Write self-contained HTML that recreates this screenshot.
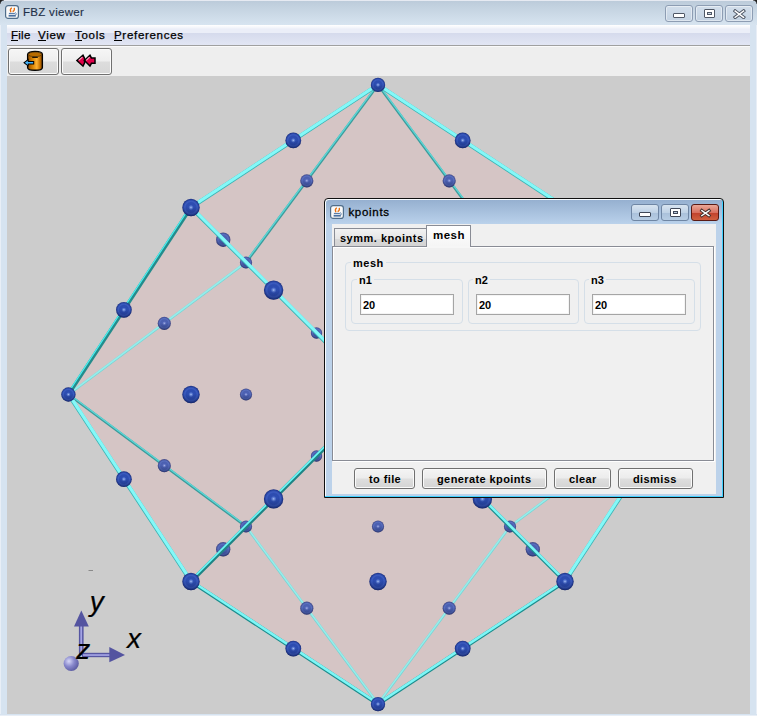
<!DOCTYPE html>
<html><head><meta charset="utf-8">
<style>
*{box-sizing:border-box}
html,body{margin:0;padding:0}
body{width:757px;height:716px;overflow:hidden;position:relative;background:#d6e3f0;font-family:"Liberation Sans",sans-serif}
.a{position:absolute}
#title{left:0;top:0;width:757px;height:25px;background:linear-gradient(#e6eaf2 0,#e6eaf2 1px,#bccbda 1px,#c2d1df 6px,#d7e4f0 25px)}
#lframe{left:0;top:25px;width:7px;height:691px;background:linear-gradient(90deg,#e8eef6 0,#e8eef6 1px,#d6e3f0 1px)}
#rframe{left:750px;top:25px;width:7px;height:691px;background:linear-gradient(90deg,#d6e3f0 0,#d6e3f0 6px,#e8eef6 6px)}
#bframe{left:0;top:714px;width:757px;height:2px;background:linear-gradient(#d6e3f0 0,#d6e3f0 1px,#e8eef6 1px)}
#menubar{left:7px;top:25px;width:743px;height:20px;background:linear-gradient(#ffffff 0,#f2f4fa 3px,#ebeef8 4px,#ebeef8 8px,#d5daec 8px,#e2e6f4 20px)}
#mline{left:7px;top:45px;width:743px;height:1px;background:#a0a0a0}
#toolbar{left:7px;top:46px;width:743px;height:30px;background:linear-gradient(#fafafa 0,#fafafa 1px,#eeeeee 1px)}
#canvas{left:7px;top:76px;width:743px;height:638px;background:#cccccc;overflow:hidden}
.menu{top:25px;height:20px;font-size:11.5px;line-height:20px;color:#000;letter-spacing:0.7px;white-space:nowrap;-webkit-text-stroke:0.25px #000}
.menu u{text-decoration:none;border-bottom:1px solid #000;display:inline-block;line-height:14px;height:15px}
.tbtn{top:48px;width:51px;height:27px;border:1px solid #707070;border-radius:3px;background:linear-gradient(#f6f6f6 0,#eeeeee 12px,#dddddd 13px,#d6d6d6 26px);box-shadow:inset 0 0 0 1px #fbfbfb}
.wbtn{top:5px;width:28px;height:17px;border:1px solid #8d9db3;border-radius:3px;background:linear-gradient(#d2deeb,#c3d2e2);box-shadow:inset 0 0 0 1px rgba(255,255,255,0.45)}
#dlg{left:324px;top:198px;width:400px;height:300px;border:1px solid #101010;border-radius:4px 4px 0 0;background:linear-gradient(#f8fcff 0,#f8fcff 1px,#96b0d0 1px,#b8d0ea 24px,#bcd2ea 25px);box-shadow:inset -1px -1px 0 #40d0ff, inset 1px 1px 0 #f8fcff}
#dcontent{left:7px;top:25px;width:384px;height:270px;background:#f0f0f0}
.dbtn{top:5px;width:28px;height:17px;border:1px solid #6f86a4;border-radius:3px;background:linear-gradient(#d8e4f0 0,#bfd2e6 50%,#a9c0da 51%,#b7cde4 100%)}
.bold{font-weight:bold;font-size:11px;color:#000;white-space:nowrap}
.tf{height:21px;width:94px;border:1px solid #a5a5a5;background:#fff;box-shadow:inset 0 0 0 1px #f4f4f4}
.grp{border:1px solid #d5dfe8;border-radius:4px}
.pbtn{top:270px;height:21px;border:1px solid #707070;border-radius:3px;background:linear-gradient(#f4f4f4 0,#ececec 9px,#dedede 10px,#d4d4d4 100%);box-shadow:inset 0 0 0 1px #fafafa}
</style></head><body>
<div id="title" class="a"></div>
<div class="a" style="left:0;top:0;width:4px;height:4px;background:radial-gradient(circle at 100% 100%,transparent 3px,#222 4px)"></div>
<div class="a" style="left:753px;top:0;width:4px;height:4px;background:radial-gradient(circle at 0 100%,transparent 3px,#222 4px)"></div>
<!-- java icon -->
<svg class="a" style="left:5px;top:5px" width="14" height="14"><rect x="0.6" y="0.6" width="12.8" height="12.8" rx="2.5" fill="#fafafa" stroke="#4f6d8a" stroke-width="1.2"/><path d="M6.8 2.8c-1.6 1-1.8 2.6-.9 4.4M7.6 6.6c1.3-.5 2.1-1.9 1.7-3.8" stroke="#e87010" stroke-width="1.3" fill="none"/><rect x="3.9" y="7.9" width="6" height="1" fill="#4a70a0"/><rect x="3.6" y="9.8" width="7.2" height="1.8" fill="#4a70a0"/><path d="M10.2 7.5q1.7.5.6 2.7" stroke="#4a70a0" stroke-width="0.9" fill="none"/></svg>
<div class="a" style="left:23px;top:4px;font-size:11.5px;letter-spacing:0.3px;line-height:16px;color:#1e3048;white-space:nowrap;-webkit-text-stroke:0.15px #1e3048">FBZ viewer</div>
<div class="a wbtn" style="left:665px"><div class="a" style="left:7px;top:7px;width:12px;height:5px;border:1px solid #505866;border-radius:1px;background:#fff"></div></div>
<div class="a wbtn" style="left:695px"><div class="a" style="left:8px;top:3px;width:11px;height:9px;border:1px solid #505866;border-radius:1px;background:#fff"><div class="a" style="left:2px;top:2px;width:5px;height:3px;border:1px solid #505866;background:#c8d4e2"></div></div></div>
<div class="a wbtn" style="left:725px"><svg class="a" style="left:7px;top:3px" width="13" height="10"><path d="M2.2 2L10.6 8.3M10.6 2L2.2 8.3" stroke="#505866" stroke-width="3.4" stroke-linecap="square"/><path d="M2.2 2L10.6 8.3M10.6 2L2.2 8.3" stroke="#ffffff" stroke-width="1.5" stroke-linecap="square"/></svg></div>
<div id="lframe" class="a"></div><div id="rframe" class="a"></div><div id="bframe" class="a"></div>
<div id="menubar" class="a"></div><div id="mline" class="a"></div><div id="toolbar" class="a"></div>
<div class="a menu" style="left:11px;letter-spacing:0.25px">File</div><div class="a" style="left:11px;top:40px;width:7px;height:1px;background:#000"></div>
<div class="a menu" style="left:38px">View</div><div class="a" style="left:38px;top:40px;width:8px;height:1px;background:#000"></div>
<div class="a menu" style="left:75px">Tools</div><div class="a" style="left:75px;top:40px;width:7px;height:1px;background:#000"></div>
<div class="a menu" style="left:114px">Preferences</div><div class="a" style="left:114px;top:40px;width:8px;height:1px;background:#000"></div>
<div class="a tbtn" style="left:8px"></div>
<svg class="a" style="left:21px;top:49px" width="24" height="24">
<defs><linearGradient id="cyl" x1="0" x2="1"><stop offset="0" stop-color="#8a4800"/><stop offset="0.3" stop-color="#d07c00"/><stop offset="0.62" stop-color="#ffb232"/><stop offset="0.85" stop-color="#c06e00"/><stop offset="1" stop-color="#703800"/></linearGradient></defs>
<path d="M6.6 5.4 C6.6 1.4 21.4 1.4 21.4 5.4 V18.4 C21.4 22.2 6.6 22.2 6.6 18.4 Z" fill="url(#cyl)" stroke="#000" stroke-width="1.3"/>
<path d="M7.4 5.4 C7.4 2.4 20.6 2.4 20.6 5.4 C20.6 8.4 7.4 8.4 7.4 5.4Z" fill="#b86c00" stroke="#3a2a10" stroke-width="0.6"/>
<path d="M11.2 8.3h5.6" stroke="#000" stroke-width="1.1"/>
<path d="M2.2 13.7 L7.6 9.6 V12 H13.2 V15.6 H7.6 V17.8 Z" fill="#000"/>
<path d="M3.9 13.7 L6.8 11.4 V12.9 H12.2 V14.6 H6.8 V16 Z" fill="#48b8ff"/>
</svg>
<div class="a tbtn" style="left:61px"></div>
<svg class="a" style="left:74px;top:52px" width="24" height="18">
<path d="M2.9 8.6 L9 3.2 L10.6 6.4 L10.6 10.8 L9 14 Z" fill="#e0004a" stroke="#000" stroke-width="1.5" stroke-linejoin="miter"/>
<path d="M10.4 8.6 L16 3.2 L17.4 5.9 L21 5.9 L21 11.3 L17.4 11.3 L16 14 Z" fill="#e0004a" stroke="#000" stroke-width="1.5" stroke-linejoin="miter"/>
<path d="M4.6 8.4 L8.4 5.1" stroke="#ffa8c4" stroke-width="1.1"/>
<path d="M12.2 8.4 L15.6 5.1" stroke="#ffa8c4" stroke-width="1.1"/>
<path d="M4.8 9.2 L9 12.6" stroke="#c00030" stroke-width="0.8"/>
</svg>
<div id="canvas" class="a">
<svg width="743" height="638" style="position:absolute;left:0;top:0">
<defs>
<radialGradient id="gf" cx="0.5" cy="0.5" r="0.5"><stop offset="0" stop-color="#b0c6f6"/><stop offset="0.13" stop-color="#6484d8"/><stop offset="0.3" stop-color="#2e4eb2"/><stop offset="0.55" stop-color="#2c4cb0"/><stop offset="0.72" stop-color="#3c5cc0"/><stop offset="0.86" stop-color="#2a48a8"/><stop offset="1" stop-color="#1a2c7a"/></radialGradient>
<radialGradient id="gb" cx="0.5" cy="0.5" r="0.5"><stop offset="0" stop-color="#b8c4f0"/><stop offset="0.13" stop-color="#7888d0"/><stop offset="0.3" stop-color="#4e62b4"/><stop offset="0.55" stop-color="#4c60b0"/><stop offset="0.72" stop-color="#5a70c0"/><stop offset="0.86" stop-color="#4a5aa4"/><stop offset="1" stop-color="#4a4c84"/></radialGradient><linearGradient id="sh" x1="0" y1="0" x2="0" y2="1"><stop offset="0.45" stop-color="#0a1440" stop-opacity="0"/><stop offset="1" stop-color="#0a1440" stop-opacity="0.4"/></linearGradient>
<radialGradient id="gax" cx="0.35" cy="0.35" r="0.7"><stop offset="0" stop-color="#d8d8f8"/><stop offset="0.5" stop-color="#8888cc"/><stop offset="1" stop-color="#5a5aa0"/></radialGradient>
</defs>
<g transform="translate(-7,-76)">
<polygon points="378.0,84.9 565.0,207.5 687.6,394.5 565.0,581.5 378.0,704.1 191.0,581.5 68.4,394.5 191.0,207.5" fill="#d5c5c5"/>
<line x1="245.99" y1="526.51" x2="68.45" y2="394.50" stroke="#3c9c9c" stroke-width="2.6"/><line x1="246.37" y1="525.99" x2="68.84" y2="393.98" stroke="#5cd8d8" stroke-width="1.3"/>
<line x1="245.99" y1="526.51" x2="378.00" y2="704.05" stroke="#74d6d6" stroke-width="2.5"/><line x1="246.23" y1="526.34" x2="378.24" y2="703.87" stroke="#98ecea" stroke-width="1.6"/>
<line x1="245.99" y1="262.49" x2="68.45" y2="394.50" stroke="#74d6d6" stroke-width="2.5"/><line x1="245.81" y1="262.24" x2="68.27" y2="394.26" stroke="#98ecea" stroke-width="1.6"/>
<line x1="245.99" y1="262.49" x2="378.00" y2="84.95" stroke="#3c9c9c" stroke-width="2.6"/><line x1="245.46" y1="262.10" x2="377.48" y2="84.56" stroke="#5cd8d8" stroke-width="1.3"/>
<line x1="510.01" y1="526.51" x2="687.55" y2="394.50" stroke="#74d6d6" stroke-width="2.5"/><line x1="509.84" y1="526.27" x2="687.37" y2="394.26" stroke="#98ecea" stroke-width="1.6"/>
<line x1="510.01" y1="526.51" x2="378.00" y2="704.05" stroke="#74d6d6" stroke-width="2.5"/><line x1="509.77" y1="526.34" x2="377.76" y2="703.87" stroke="#98ecea" stroke-width="1.6"/>
<line x1="510.01" y1="262.49" x2="687.55" y2="394.50" stroke="#74d6d6" stroke-width="2.5"/><line x1="510.19" y1="262.24" x2="687.73" y2="394.26" stroke="#98ecea" stroke-width="1.6"/>
<line x1="510.01" y1="262.49" x2="378.00" y2="84.95" stroke="#3c9c9c" stroke-width="2.6"/><line x1="510.54" y1="262.10" x2="378.52" y2="84.56" stroke="#5cd8d8" stroke-width="1.3"/>
<circle cx="246.0" cy="526.5" r="6.1" fill="url(#gb)"/><circle cx="246.0" cy="526.5" r="6.1" fill="url(#sh)"/>
<circle cx="246.0" cy="262.5" r="6.1" fill="url(#gb)"/><circle cx="246.0" cy="262.5" r="6.1" fill="url(#sh)"/>
<circle cx="510.0" cy="526.5" r="6.1" fill="url(#gb)"/><circle cx="510.0" cy="526.5" r="6.1" fill="url(#sh)"/>
<circle cx="510.0" cy="262.5" r="6.1" fill="url(#gb)"/><circle cx="510.0" cy="262.5" r="6.1" fill="url(#sh)"/>
<circle cx="164.3" cy="465.7" r="6.6" fill="url(#gb)"/><circle cx="164.3" cy="465.7" r="6.6" fill="url(#sh)"/>
<circle cx="306.8" cy="608.2" r="6.6" fill="url(#gb)"/><circle cx="306.8" cy="608.2" r="6.6" fill="url(#sh)"/>
<circle cx="316.5" cy="456.0" r="5.7" fill="url(#gb)"/><circle cx="316.5" cy="456.0" r="5.7" fill="url(#sh)"/>
<circle cx="164.3" cy="323.3" r="6.6" fill="url(#gb)"/><circle cx="164.3" cy="323.3" r="6.6" fill="url(#sh)"/>
<circle cx="306.8" cy="180.8" r="6.6" fill="url(#gb)"/><circle cx="306.8" cy="180.8" r="6.6" fill="url(#sh)"/>
<circle cx="316.5" cy="333.0" r="5.7" fill="url(#gb)"/><circle cx="316.5" cy="333.0" r="5.7" fill="url(#sh)"/>
<circle cx="591.7" cy="465.7" r="6.6" fill="url(#gb)"/><circle cx="591.7" cy="465.7" r="6.6" fill="url(#sh)"/>
<circle cx="449.2" cy="608.2" r="6.6" fill="url(#gb)"/><circle cx="449.2" cy="608.2" r="6.6" fill="url(#sh)"/>
<circle cx="439.5" cy="456.0" r="5.7" fill="url(#gb)"/><circle cx="439.5" cy="456.0" r="5.7" fill="url(#sh)"/>
<circle cx="591.7" cy="323.3" r="6.6" fill="url(#gb)"/><circle cx="591.7" cy="323.3" r="6.6" fill="url(#sh)"/>
<circle cx="449.2" cy="180.8" r="6.6" fill="url(#gb)"/><circle cx="449.2" cy="180.8" r="6.6" fill="url(#sh)"/>
<circle cx="439.5" cy="333.0" r="5.7" fill="url(#gb)"/><circle cx="439.5" cy="333.0" r="5.7" fill="url(#sh)"/>
<circle cx="223.2" cy="549.3" r="7.2" fill="url(#gb)"/><circle cx="223.2" cy="549.3" r="7.2" fill="url(#sh)"/>
<circle cx="223.2" cy="239.7" r="7.2" fill="url(#gb)"/><circle cx="223.2" cy="239.7" r="7.2" fill="url(#sh)"/>
<circle cx="532.8" cy="549.3" r="7.2" fill="url(#gb)"/><circle cx="532.8" cy="549.3" r="7.2" fill="url(#sh)"/>
<circle cx="532.8" cy="239.7" r="7.2" fill="url(#gb)"/><circle cx="532.8" cy="239.7" r="7.2" fill="url(#sh)"/>
<circle cx="246.0" cy="394.5" r="6.1" fill="url(#gb)"/><circle cx="246.0" cy="394.5" r="6.1" fill="url(#sh)"/>
<circle cx="510.0" cy="394.5" r="6.1" fill="url(#gb)"/><circle cx="510.0" cy="394.5" r="6.1" fill="url(#sh)"/>
<circle cx="378.0" cy="526.5" r="6.1" fill="url(#gb)"/><circle cx="378.0" cy="526.5" r="6.1" fill="url(#sh)"/>
<circle cx="378.0" cy="262.5" r="6.1" fill="url(#gb)"/><circle cx="378.0" cy="262.5" r="6.1" fill="url(#sh)"/>
<line x1="190.98" y1="581.52" x2="68.45" y2="394.50" stroke="#3ab4b4" stroke-width="4.0"/><line x1="191.36" y1="581.27" x2="68.82" y2="394.25" stroke="#84f8f8" stroke-width="3.2"/>
<line x1="190.98" y1="581.52" x2="378.00" y2="704.05" stroke="#1c8c8c" stroke-width="3.8"/><line x1="191.31" y1="581.02" x2="378.33" y2="703.55" stroke="#7cf6f6" stroke-width="2.6"/>
<line x1="190.98" y1="581.52" x2="378.00" y2="394.50" stroke="#1f8484" stroke-width="3.9"/><line x1="190.27" y1="580.81" x2="377.29" y2="393.79" stroke="#6cf4f4" stroke-width="1.8"/>
<line x1="190.98" y1="207.48" x2="68.45" y2="394.50" stroke="#248c8c" stroke-width="3.6"/><line x1="189.98" y1="206.82" x2="67.44" y2="393.84" stroke="#4af0f0" stroke-width="1.2"/>
<line x1="190.98" y1="207.48" x2="378.00" y2="84.95" stroke="#3ab4b4" stroke-width="4.0"/><line x1="190.73" y1="207.10" x2="377.75" y2="84.57" stroke="#84f8f8" stroke-width="3.2"/>
<line x1="190.98" y1="207.48" x2="378.00" y2="394.50" stroke="#3ab4b4" stroke-width="4.0"/><line x1="191.30" y1="207.16" x2="378.32" y2="394.18" stroke="#84f8f8" stroke-width="3.2"/>
<line x1="565.02" y1="581.52" x2="687.55" y2="394.50" stroke="#3ab4b4" stroke-width="4.0"/><line x1="564.64" y1="581.27" x2="687.18" y2="394.25" stroke="#84f8f8" stroke-width="3.2"/>
<line x1="565.02" y1="581.52" x2="378.00" y2="704.05" stroke="#1c8c8c" stroke-width="3.8"/><line x1="564.69" y1="581.02" x2="377.67" y2="703.55" stroke="#7cf6f6" stroke-width="2.6"/>
<line x1="565.02" y1="581.52" x2="378.00" y2="394.50" stroke="#1c8c8c" stroke-width="3.8"/><line x1="565.45" y1="581.10" x2="378.42" y2="394.08" stroke="#7cf6f6" stroke-width="2.6"/>
<line x1="565.02" y1="207.48" x2="687.55" y2="394.50" stroke="#3ab4b4" stroke-width="4.0"/><line x1="565.40" y1="207.23" x2="687.93" y2="394.25" stroke="#84f8f8" stroke-width="3.2"/>
<line x1="565.02" y1="207.48" x2="378.00" y2="84.95" stroke="#3ab4b4" stroke-width="4.0"/><line x1="565.27" y1="207.10" x2="378.25" y2="84.57" stroke="#84f8f8" stroke-width="3.2"/>
<line x1="565.02" y1="207.48" x2="378.00" y2="394.50" stroke="#3ab4b4" stroke-width="4.0"/><line x1="564.70" y1="207.16" x2="377.68" y2="394.18" stroke="#84f8f8" stroke-width="3.2"/>
<circle cx="191.0" cy="581.5" r="8.7" fill="url(#gf)"/><circle cx="191.0" cy="581.5" r="8.7" fill="url(#sh)"/>
<circle cx="191.0" cy="207.5" r="8.7" fill="url(#gf)"/><circle cx="191.0" cy="207.5" r="8.7" fill="url(#sh)"/>
<circle cx="565.0" cy="581.5" r="8.7" fill="url(#gf)"/><circle cx="565.0" cy="581.5" r="8.7" fill="url(#sh)"/>
<circle cx="565.0" cy="207.5" r="8.7" fill="url(#gf)"/><circle cx="565.0" cy="207.5" r="8.7" fill="url(#sh)"/>
<circle cx="378.0" cy="84.9" r="7.2" fill="url(#gf)"/><circle cx="378.0" cy="84.9" r="7.2" fill="url(#sh)"/>
<circle cx="68.4" cy="394.5" r="7.2" fill="url(#gf)"/><circle cx="68.4" cy="394.5" r="7.2" fill="url(#sh)"/>
<circle cx="378.0" cy="704.1" r="7.2" fill="url(#gf)"/><circle cx="378.0" cy="704.1" r="7.2" fill="url(#sh)"/>
<circle cx="687.6" cy="394.5" r="7.2" fill="url(#gf)"/><circle cx="687.6" cy="394.5" r="7.2" fill="url(#sh)"/>
<circle cx="123.9" cy="479.2" r="7.9" fill="url(#gf)"/><circle cx="123.9" cy="479.2" r="7.9" fill="url(#sh)"/>
<circle cx="293.3" cy="648.6" r="7.9" fill="url(#gf)"/><circle cx="293.3" cy="648.6" r="7.9" fill="url(#sh)"/>
<circle cx="273.6" cy="498.9" r="9.7" fill="url(#gf)"/><circle cx="273.6" cy="498.9" r="9.7" fill="url(#sh)"/>
<circle cx="123.9" cy="309.8" r="7.9" fill="url(#gf)"/><circle cx="123.9" cy="309.8" r="7.9" fill="url(#sh)"/>
<circle cx="293.3" cy="140.4" r="7.9" fill="url(#gf)"/><circle cx="293.3" cy="140.4" r="7.9" fill="url(#sh)"/>
<circle cx="273.6" cy="290.1" r="9.7" fill="url(#gf)"/><circle cx="273.6" cy="290.1" r="9.7" fill="url(#sh)"/>
<circle cx="632.1" cy="479.2" r="7.9" fill="url(#gf)"/><circle cx="632.1" cy="479.2" r="7.9" fill="url(#sh)"/>
<circle cx="462.7" cy="648.6" r="7.9" fill="url(#gf)"/><circle cx="462.7" cy="648.6" r="7.9" fill="url(#sh)"/>
<circle cx="482.4" cy="498.9" r="9.7" fill="url(#gf)"/><circle cx="482.4" cy="498.9" r="9.7" fill="url(#sh)"/>
<circle cx="632.1" cy="309.8" r="7.9" fill="url(#gf)"/><circle cx="632.1" cy="309.8" r="7.9" fill="url(#sh)"/>
<circle cx="462.7" cy="140.4" r="7.9" fill="url(#gf)"/><circle cx="462.7" cy="140.4" r="7.9" fill="url(#sh)"/>
<circle cx="482.4" cy="290.1" r="9.7" fill="url(#gf)"/><circle cx="482.4" cy="290.1" r="9.7" fill="url(#sh)"/>
<circle cx="191.0" cy="394.5" r="8.7" fill="url(#gf)"/><circle cx="191.0" cy="394.5" r="8.7" fill="url(#sh)"/>
<circle cx="565.0" cy="394.5" r="8.7" fill="url(#gf)"/><circle cx="565.0" cy="394.5" r="8.7" fill="url(#sh)"/>
<circle cx="378.0" cy="581.5" r="8.7" fill="url(#gf)"/><circle cx="378.0" cy="581.5" r="8.7" fill="url(#sh)"/>
<circle cx="378.0" cy="207.5" r="8.7" fill="url(#gf)"/><circle cx="378.0" cy="207.5" r="8.7" fill="url(#sh)"/>
<!-- axes -->
<line x1="88.5" y1="570.5" x2="93" y2="570.5" stroke="#8a8a8a" stroke-width="1"/>
<rect x="78.9" y="625" width="4.7" height="30" fill="#5656a2"/>
<rect x="80.3" y="625" width="1.8" height="28" fill="#a4a4e4"/>
<polygon points="81.3,610.4 74,626.6 88.8,626.6" fill="#5454a0"/>
<rect x="82" y="652.8" width="28" height="4.4" fill="#5656a2"/>
<rect x="83" y="654.2" width="27" height="1.7" fill="#a4a4e4"/>
<polygon points="125,654.9 109.3,647 109.3,662.3" fill="#5454a0"/>
<circle cx="71.2" cy="663.5" r="7.6" fill="url(#gax)"/>
<text x="89.8" y="610.7" font-family="Liberation Sans" font-style="italic" font-size="28" fill="#000" stroke="#000" stroke-width="0.2">y</text>
<text x="127" y="648" font-family="Liberation Sans" font-style="italic" font-size="28" fill="#000" stroke="#000" stroke-width="0.2">x</text>
<text x="76.3" y="658.6" font-family="Liberation Sans" font-style="italic" font-size="28" fill="#000" stroke="#000" stroke-width="0.2">z</text>
</g>
</svg>
</div>
<!-- dialog -->
<div id="dlg" class="a">
<svg class="a" style="left:5px;top:6px" width="14" height="14"><rect x="0.6" y="0.6" width="12.8" height="12.8" rx="2.5" fill="#fafafa" stroke="#4f6d8a" stroke-width="1.2"/><path d="M6.8 2.8c-1.6 1-1.8 2.6-.9 4.4M7.6 6.6c1.3-.5 2.1-1.9 1.7-3.8" stroke="#e87010" stroke-width="1.3" fill="none"/><rect x="3.9" y="7.9" width="6" height="1" fill="#4a70a0"/><rect x="3.6" y="9.8" width="7.2" height="1.8" fill="#4a70a0"/><path d="M10.2 7.5q1.7.5.6 2.7" stroke="#4a70a0" stroke-width="0.9" fill="none"/></svg>
<div class="a" style="left:23.4px;top:4.5px;font-size:11.5px;letter-spacing:0.7px;line-height:16px;color:#000;white-space:nowrap;-webkit-text-stroke:0.3px #000">kpoints</div>
<div class="a dbtn" style="left:306px"><div class="a" style="left:7px;top:7px;width:12px;height:5px;border:1px solid #404858;border-radius:1px;background:#fff"></div></div>
<div class="a dbtn" style="left:336px"><div class="a" style="left:8px;top:3px;width:11px;height:9px;border:1px solid #404858;border-radius:1px;background:#fff"><div class="a" style="left:2px;top:2px;width:5px;height:3px;border:1px solid #404858;background:#b8c8dc"></div></div></div>
<div class="a dbtn" style="left:366px;border-color:#5a1a14;background:linear-gradient(#eaa898 0,#d87060 50%,#c0402c 51%,#d06040 100%)"><svg class="a" style="left:7px;top:3px" width="13" height="10"><path d="M2.8 2.6L10 7.6M10 2.6L2.8 7.6" stroke="#40302c" stroke-width="3.2" stroke-linecap="square"/><path d="M2.8 2.6L10 7.6M10 2.6L2.8 7.6" stroke="#ffffff" stroke-width="1.4" stroke-linecap="square"/></svg></div>
<div id="dcontent" class="a">
 <!-- tabs -->
 <div class="a" style="left:2px;top:4px;width:94px;height:20px;border:1px solid #898c95;border-bottom:none;background:linear-gradient(#f2f2f2,#e6e6e6 50%,#d9d9d9 51%,#d2d2d2)"></div>
 <div class="a bold" style="left:8px;top:8px;letter-spacing:0.5px">symm. kpoints</div>
 <div class="a" style="left:94px;top:1px;width:45px;height:23px;border:1px solid #898c95;border-bottom:none;background:linear-gradient(#ffffff,#f4f4f4)"></div>
 <div class="a bold" style="left:101px;top:5px;letter-spacing:0.5px;font-size:11.5px">mesh</div>
 <div class="a" style="left:0px;top:22px;width:382px;height:215px;border:1px solid #898c95;box-shadow:inset 1px 1px 0 #fff, 1px 1px 0 #fff"></div>
 <div class="a" style="left:95px;top:22px;width:43px;height:2px;background:#f6f6f6"></div>
 <!-- mesh group -->
 <div class="a grp" style="left:13px;top:38px;width:356px;height:69px"></div>
 <div class="a bold" style="left:19px;top:33px;padding:0 2px;background:#f0f0f0;letter-spacing:0.5px">mesh</div>
 <div class="a grp" style="left:19px;top:55px;width:112px;height:45px"></div>
 <div class="a bold" style="left:25px;top:50px;padding:0 2px;background:#f0f0f0">n1</div>
 <div class="a tf" style="left:28px;top:70px"></div>
 <div class="a bold" style="left:31px;top:75px">20</div>
 <div class="a grp" style="left:136px;top:55px;width:111px;height:45px"></div>
 <div class="a bold" style="left:141px;top:50px;padding:0 2px;background:#f0f0f0">n2</div>
 <div class="a tf" style="left:144px;top:70px"></div>
 <div class="a bold" style="left:147px;top:75px">20</div>
 <div class="a grp" style="left:252px;top:55px;width:111px;height:45px"></div>
 <div class="a bold" style="left:257px;top:50px;padding:0 2px;background:#f0f0f0">n3</div>
 <div class="a tf" style="left:260px;top:70px"></div>
 <div class="a bold" style="left:263px;top:75px">20</div>
 <!-- buttons -->
 <div class="a pbtn" style="left:22px;top:244px;width:61px"></div>
 <div class="a bold" style="left:37px;top:249px;letter-spacing:0.4px">to file</div>
 <div class="a pbtn" style="left:90px;top:244px;width:125px"></div>
 <div class="a bold" style="left:105px;top:249px;letter-spacing:0.4px">generate kpoints</div>
 <div class="a pbtn" style="left:222px;top:244px;width:57px"></div>
 <div class="a bold" style="left:237px;top:249px;letter-spacing:0.4px">clear</div>
 <div class="a pbtn" style="left:286px;top:244px;width:75px"></div>
 <div class="a bold" style="left:301px;top:249px;letter-spacing:0.4px">dismiss</div>
</div>
</div>
</body></html>
